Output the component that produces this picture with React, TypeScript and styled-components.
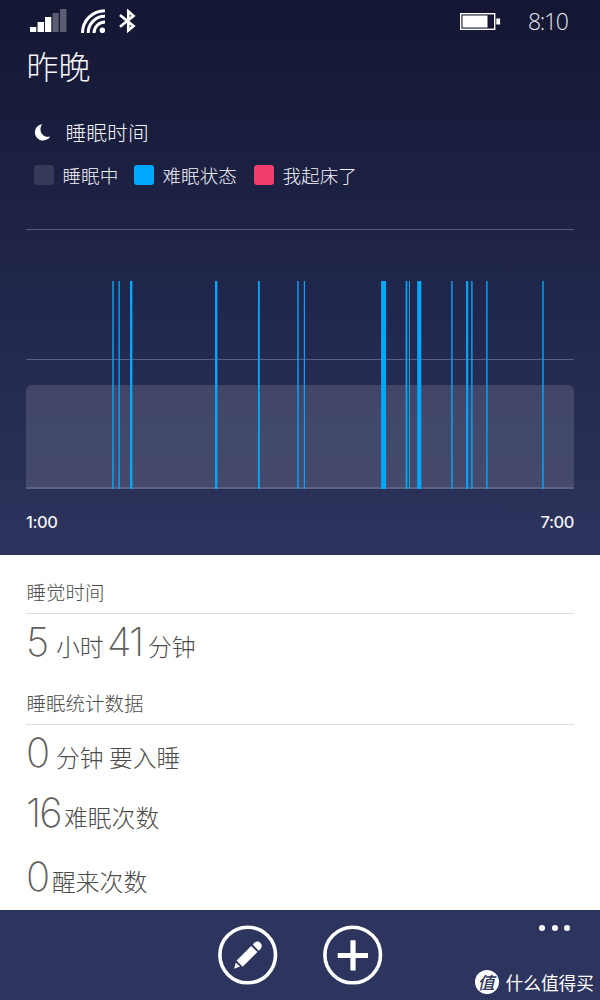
import React from "react";
import styled, { createGlobalStyle } from "styled-components";

const Global = createGlobalStyle`
  * { box-sizing: border-box; }
  body { margin: 0; background: #fff; }
`;
const cjk = `"Noto Sans CJK SC", sans-serif`;

const Screen = styled.div`
  width: 600px;
  height: 1000px;
  display: flex;
  flex-direction: column;
  overflow: hidden;
  background: #fff;
  font-family: Inter, ${cjk};
  font-weight: 300;
`;
const Night = styled.section`
  height: 555px;
  flex: none;
  background: linear-gradient(#141733, #20254a 50%, #2d345d);
  color: #e6e7ee;
`;
const StatusBar = styled.header`
  display: flex;
  align-items: center;
  justify-content: space-between;
  height: 42px;
  padding: 0 31px 0 30px;
`;
const StatusGroup = styled.div<{ $gap: number }>`
  display: flex;
  align-items: center;
  gap: ${(p) => p.$gap}px;
`;
const Clock = styled.span`
  font: 350 23px/42px "Open Sans", sans-serif;
  letter-spacing: -1.3px;
  width: 41px;
  white-space: nowrap;
`;
const Title = styled.h1`
  margin: 0;
  padding-left: 26.5px;
  height: 48px;
  font: 300 32px/46px ${cjk};
  color: #f6f6f9;
`;
const Subhead = styled.div`
  display: flex;
  align-items: center;
  gap: 15px;
  height: 30px;
  margin-top: 27px;
  padding-left: 33.5px;
  font: 300 20.8px/30px ${cjk};
  color: #f3f3f7;
`;
const Legend = styled.div`
  display: flex;
  align-items: center;
  height: 30px;
  margin: 13px 0 0 33.5px;
  color: #f3f3f7;
`;
const LegendItem = styled.div<{ $width: number }>`
  display: flex;
  align-items: center;
  gap: 9px;
  width: ${(p) => p.$width}px;
  font: 300 18.6px/30px ${cjk};
  white-space: nowrap;
`;
const Swatch = styled.i<{ $color: string }>`
  width: 20px;
  height: 20px;
  border-radius: 3px;
  background: ${(p) => p.$color};
`;
const Chart = styled.svg`
  display: block;
  margin: 34px 0 0 26px;
`;
const Hours = styled.div`
  display: flex;
  justify-content: space-between;
  padding: 0 26px 0 26px;
  margin-top: 21px;
  font: 450 16.5px/24px Inter, sans-serif;
  letter-spacing: -0.4px;
  color: #f1f1f5;
`;
const Stats = styled.main`
  height: 355px;
  flex: none;
  padding: 0 26px;
  color: #4c4c4c;
`;
const Heading = styled.h2<{ $height: number }>`
  display: flex;
  align-items: flex-end;
  height: ${(p) => p.$height}px;
  margin: 0;
  padding: 0 0 6px 0.5px;
  border-bottom: 1px solid #dcdcdc;
  font: 300 19.5px/30px ${cjk};
`;
const Stat = styled.div<{ $height: number }>`
  display: flex;
  align-items: baseline;
  height: ${(p) => p.$height}px;
  padding-top: 1px;
  line-height: 54px;
  white-space: nowrap;
`;
const Figure = styled.span<{ $width: number }>`
  width: ${(p) => p.$width}px;
  font: 250 40px/54px Inter, sans-serif;
  letter-spacing: -2px;
  color: #606060;
`;
const Unit = styled.span<{ $width?: number }>`
  width: ${(p) => (p.$width ? `${p.$width}px` : "auto")};
  font: 300 23.8px/54px ${cjk};
`;
const AppBar = styled.footer`
  position: relative;
  display: flex;
  justify-content: center;
  gap: 45px;
  height: 90px;
  padding-top: 15px;
  background: #2d345d;
`;
const RoundButton = styled.button`
  width: 60px;
  height: 60px;
  padding: 0;
  border: 0;
  background: none;
`;
const More = styled.div`
  position: absolute;
  top: 15px;
  right: 30px;
  display: flex;
  gap: 6.5px;
`;
const Dot = styled.i`
  width: 6px;
  height: 6px;
  border-radius: 50%;
  background: #fff;
`;
const Brand = styled.div`
  position: absolute;
  right: 6px;
  bottom: 5px;
  display: flex;
  align-items: center;
  gap: 7px;
  font: 400 17.7px/26px ${cjk};
  color: #fff;
  white-space: nowrap;
`;
const Seal = styled.span`
  width: 24px;
  height: 24px;
  border-radius: 50%;
  background: #fff;
  color: #2d345d;
  font: italic 500 17px/23px ${cjk};
  text-indent: 3px;
`;

const wakeBars = [
  [112.3, 1.4], [118.5, 1.3], [130, 2.4], [215, 2.4], [258, 1.8], [297.3, 1.4],
  [303.8, 1.2], [381.1, 5], [405.6, 1.7], [409, 1], [417.2, 4.1], [451.2, 1.4],
  [466.1, 2.1], [471.2, 1.4], [486.2, 1.4], [542.3, 1.4],
];

export default function App() {
  return (
    <Screen>
      <Global />
      <Night>
        <StatusBar>
          <StatusGroup $gap={14}>
            <svg width="37" height="24" viewBox="0 0 37 24" fill="#fff">
              <path d="M0 18h6.3v5H0zM7.6 13H14v10H7.6zM15 8h6.3v15H15z" />
              <path d="M22.5 4h6.2v19h-6.2zM30-1h6.5v24H30z" opacity=".3" />
            </svg>
            <svg width="24" height="24" viewBox="0 0 24 24" fill="none" stroke="#fff" strokeWidth="3">
              <path d="M1.5 24A22.3 22.3 0 0 1 24 1.7M7.2 24A16.6 16.6 0 0 1 24 7.3M13 24A11 11 0 0 1 24 13" />
              <circle cx="21.4" cy="21.2" r="2.8" fill="#fff" stroke="none" />
            </svg>
            <svg width="17" height="24" viewBox="0 0 17 24" fill="none" stroke="#fff" strokeWidth="2.7">
              <path d="M1 6L14.5 17 9.3 21.4V2.3l5.2 4.6L1 17.8" />
            </svg>
          </StatusGroup>
          <StatusGroup $gap={27}>
            <svg width="41" height="17" viewBox="0 0 41 17" fill="#fff">
              <rect x=".7" y=".7" width="34" height="15.6" fill="none" stroke="#fff" strokeWidth="1.4" />
              <path d="M2.5 2.5h25v12h-25zM36.3 5.5h3.8v6h-3.8z" />
            </svg>
            <Clock>8:10</Clock>
          </StatusGroup>
        </StatusBar>
        <Title>昨晚</Title>
        <Subhead>
          <svg width="17" height="17" viewBox="0 0 17 17">
            <path d="M8 .2A8.2 8.2 0 1 0 16.2 12.4C9 14.5 3.8 7 8 .2Z" fill="#fff" />
          </svg>
          <span>睡眠时间</span>
        </Subhead>
        <Legend>
          <LegendItem $width={100}><Swatch $color="#363a56" />睡眠中</LegendItem>
          <LegendItem $width={120}><Swatch $color="#00a8ff" />难眠状态</LegendItem>
          <LegendItem $width={110}><Swatch $color="#ef3e6c" />我起床了</LegendItem>
        </Legend>
        <Chart width="548" height="265" viewBox="26 224 548 265">
          <path d="M26 229.5H574M26 359.5H574" stroke="#fff" strokeOpacity=".25" />
          <path d="M26 489V391a6 6 0 0 1 6-6H568a6 6 0 0 1 6 6V489Z" fill="#fff" fillOpacity=".13" />
          <path d="M26 488H574" stroke="#fff" strokeOpacity=".13" strokeWidth="2" />
          {wakeBars.map(([x, w]) => (
            <rect key={x} x={x} y="281" width={w} height="208" fill="#00a8ff" />
          ))}
        </Chart>
        <Hours><span>1:00</span><span>7:00</span></Hours>
      </Night>
      <Stats>
        <Heading $height={59}>睡觉时间</Heading>
        <Stat $height={62}>
          <Figure $width={30}>5</Figure><Unit $width={51}>小时</Unit>
          <Figure $width={41}>41</Figure><Unit>分钟</Unit>
        </Stat>
        <Heading $height={49}>睡眠统计数据</Heading>
        <Stat $height={60}>
          <Figure $width={30}>0</Figure><Unit $width={53}>分钟</Unit><Unit>要入睡</Unit>
        </Stat>
        <Stat $height={64}><Figure $width={38}>16</Figure><Unit>难眠次数</Unit></Stat>
        <Stat $height={56}><Figure $width={26}>0</Figure><Unit>醒来次数</Unit></Stat>
      </Stats>
      <AppBar>
        <RoundButton aria-label="编辑">
          <svg width="60" height="60" viewBox="0 0 60 60" fill="#fff">
            <circle cx="29.7" cy="30" r="27.8" fill="none" stroke="#fff" strokeWidth="3.6" />
            <path d="M18.6 35.6L33.2 21l6.2 6-14.8 14.8ZM34.7 19.6l2-2c3.5-3.5 9.5 2 6.1 6.1l-2 2ZM17.8 37.4l4.3 4.2-6 2.2Z" />
          </svg>
        </RoundButton>
        <RoundButton aria-label="添加">
          <svg width="60" height="60" viewBox="0 0 60 60" fill="none" stroke="#fff">
            <circle cx="29.7" cy="30" r="27.8" strokeWidth="3.6" />
            <path d="M14.7 30.5H45M30 15.3V45.6" strokeWidth="5.2" />
          </svg>
        </RoundButton>
        <More><Dot /><Dot /><Dot /></More>
        <Brand><Seal>值</Seal>什么值得买</Brand>
      </AppBar>
    </Screen>
  );
}
